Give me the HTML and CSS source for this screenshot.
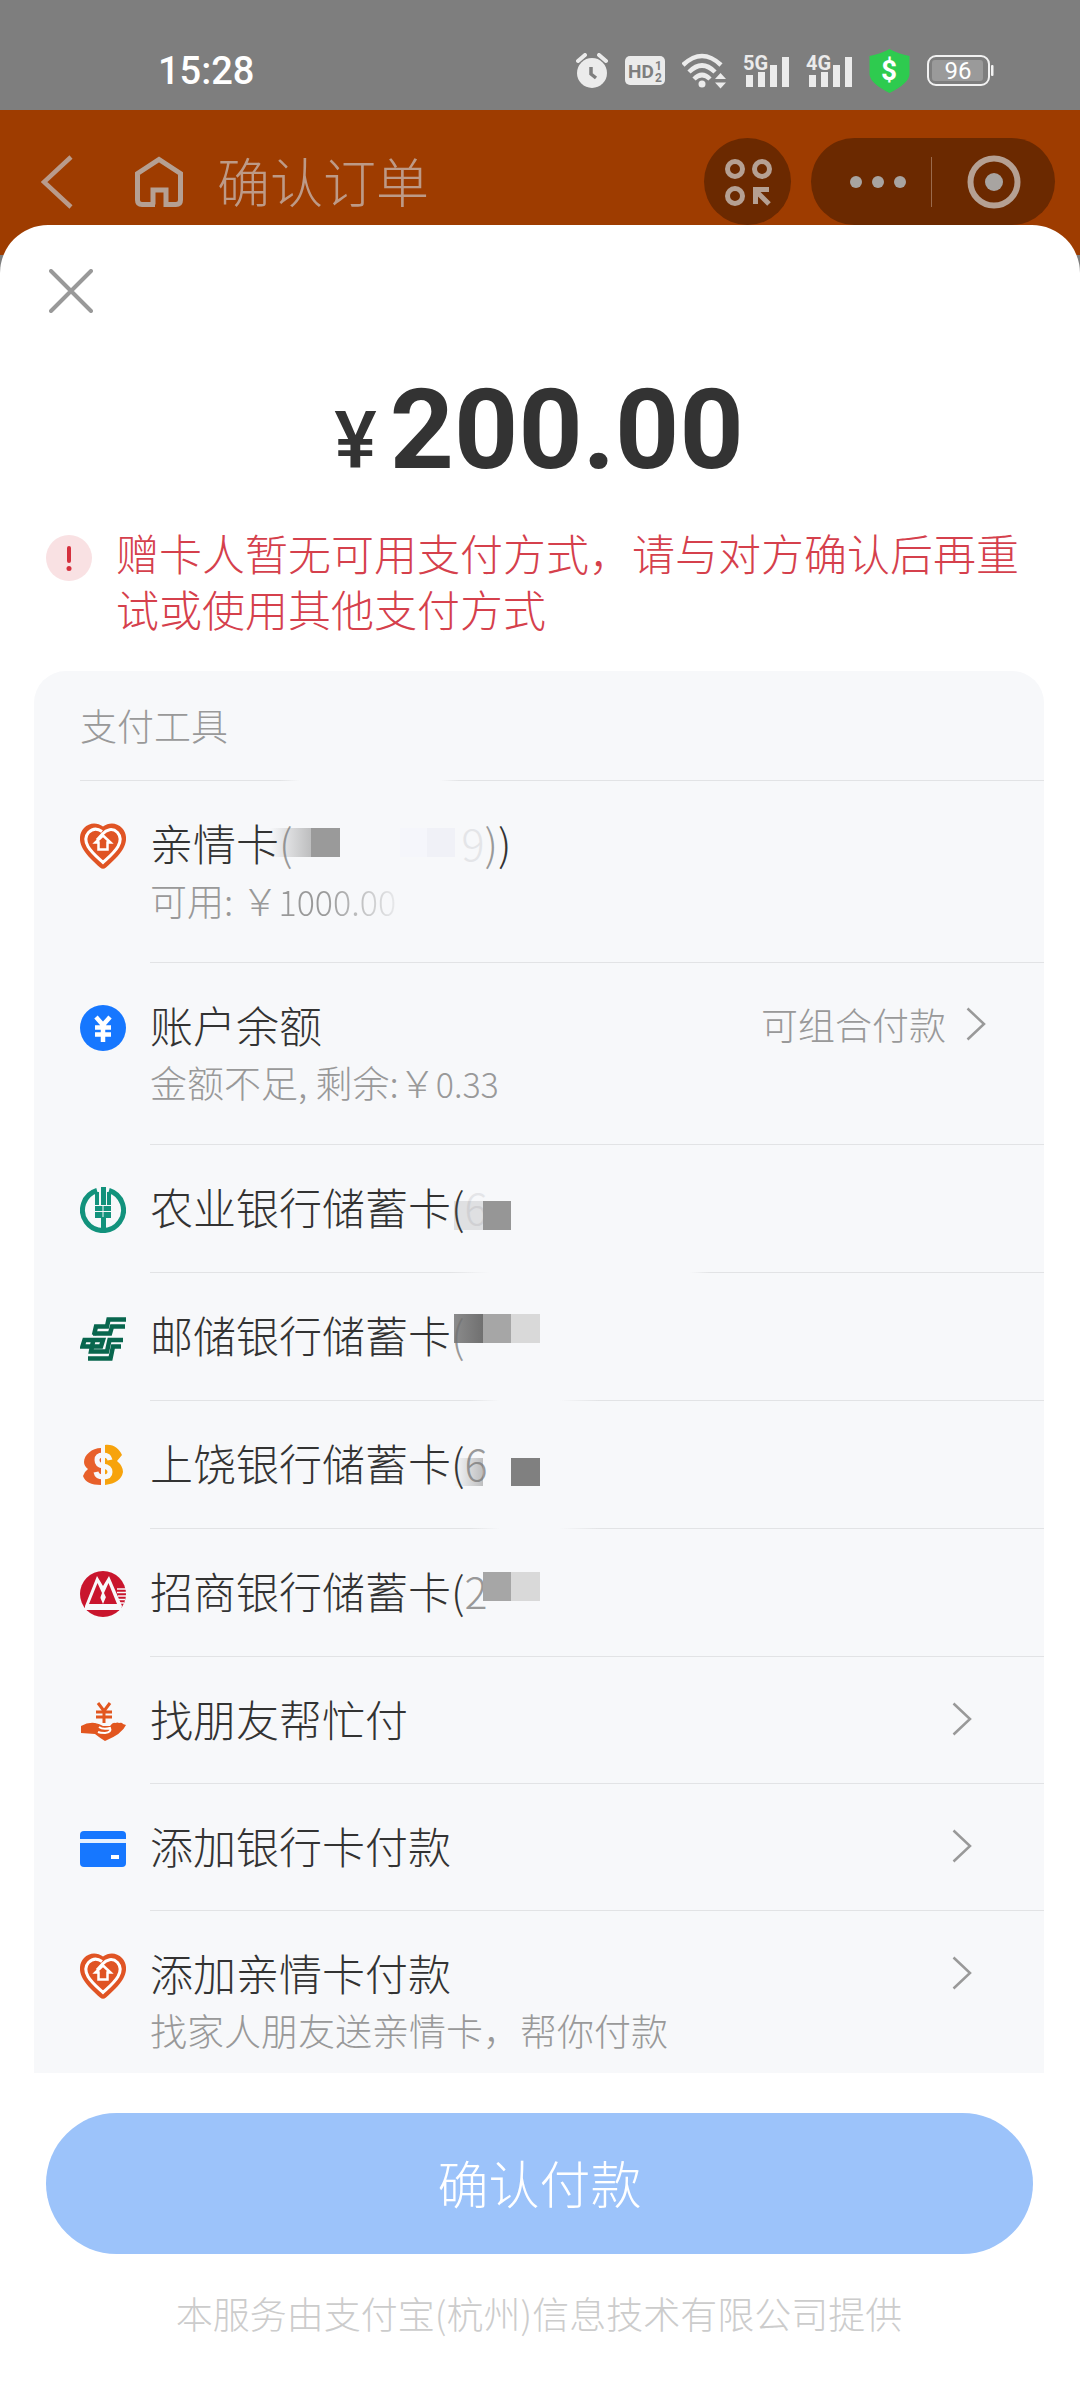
FILE: index.html
```html
<!DOCTYPE html>
<html lang="zh-CN">
<head>
<meta charset="utf-8">
<meta name="viewport" content="width=device-width, initial-scale=1">
<title>确认订单</title>
<link rel="stylesheet" href="styles.css">
</head>
<body>
<svg class="defs" aria-hidden="true">
  <defs>
    <symbol id="heart" viewBox="0 0 46 46">
      <path d="M23 3.500C17-1 9-.5 4 5-1.500 11-1 19 3 26c4 7 11 13 17 18.500q3 2.500 6 0C32 39 39 33 43 26c4-7 4.500-15-1-21C37-.5 29-1 23 3.500z" fill="#e05424"/>
      <path d="M22 8.500c-5-3.500-10-2.500-13.500 1C5 13.500 5.500 19 8 23.500 11.500 29.500 17 34 23 39.500c6-5.500 11.500-10 15-16 2.500-4.500 3-10-.5-14-5-5-11-3-15 1.500l-5.500 6" fill="none" stroke="#fff" stroke-width="3"/>
      <path d="M15.500 19.500L23 12.500l7.500 7h-3v7h-9v-7z" fill="none" stroke="#fff" stroke-width="2.500"/>
    </symbol>
    <symbol id="chevron" viewBox="0 0 20 34">
      <path d="M1.500 1.500L18 17 1.500 32.500" fill="none" stroke="#999" stroke-width="2.500"/>
    </symbol>
    <linearGradient id="fadeIn"><stop offset="0" stop-color="#777" stop-opacity="0"/><stop offset="1" stop-color="#777" stop-opacity=".45"/></linearGradient>
    <linearGradient id="fadeDark"><stop offset="0" stop-color="#707070" stop-opacity=".8"/><stop offset="1" stop-color="#707070"/></linearGradient>
  </defs>
</svg>

<div class="statusbar">
  <time class="clock">15:28</time>
  <div class="indicators">
    <svg width="32" height="36" viewBox="0 0 32 36"><path d="M2 8l7-6M30 8l-7-6" stroke="#ebebeb" stroke-width="4" stroke-linecap="round"/><circle cx="16" cy="20" r="15" fill="#ebebeb"/><path d="M15 14v7l5 4" fill="none" stroke="#7e7e7e" stroke-width="3.500"/></svg>
    <svg width="40" height="30" viewBox="0 0 40 30"><rect width="40" height="29" rx="5" fill="#ebebeb"/><text class="hd" x="3" y="22">HD</text><text class="hd-small" x="30" y="14">1</text><text class="hd-small" x="30" y="26">2</text></svg>
    <svg width="44" height="36" viewBox="0 0 44 36"><g fill="none" stroke="#ebebeb" stroke-width="4.500"><path d="M1 12q19-18 38 0"/><path d="M7 19q13-13 26 0"/><path d="M12 26q8-8 16 0"/></g><circle cx="20" cy="31" r="3.500" fill="#ebebeb"/><path d="M33 26l5.500-6 5.500 6zM33 29.500l5.500 6 5.500-6z" fill="#ebebeb"/></svg>
    <svg width="46" height="44" viewBox="0 -5 46 44"><text class="net" x="0" y="16">5G</text><path d="M3 21h7v12H3zM15 18h7v15h-7zM27 11h7v22h-7zM39 3h7v30h-7z" fill="#ebebeb"/></svg>
    <svg width="46" height="44" viewBox="0 -5 46 44"><text class="net" x="0" y="16">4G</text><path d="M3 21h7v12H3zM15 18h7v15h-7zM27 11h7v22h-7zM39 3h7v30h-7z" fill="#ebebeb"/></svg>
    <svg width="41" height="44" viewBox="0 0 41 44"><path d="M20.500 0q9 5 20 7v18q0 9-20 19Q.5 34 .5 25V7q11-2 20-7z" fill="#2ecb4f"/><text class="dollar" x="20" y="31" text-anchor="middle">$</text></svg>
    <svg width="67" height="32" viewBox="0 0 67 32"><rect x="1" y="1" width="61" height="29" rx="8" fill="none" stroke="#f2f2f2" stroke-width="2"/><rect x="5" y="5" width="51" height="21" rx="3" fill="#9a9a9a"/><rect x="64" y="10" width="2.500" height="11" rx="1" fill="#f2f2f2"/><text class="charge" x="31" y="24" text-anchor="middle">96</text></svg>
  </div>
</div>

<header class="navbar">
  <button class="plain" aria-label="返回"><svg width="32" height="54" viewBox="0 0 32 54"><path d="M30 2L3 27l27 25" fill="none" stroke="#b99b8b" stroke-width="4.500"/></svg></button>
  <button class="plain home" aria-label="首页"><svg width="48" height="52" viewBox="0 0 48 52"><path d="M20 48.500H7q-4.500 0-4.500-4.500V17.500L24 3.500l21.500 14V44q0 4.500-4.500 4.500H31V34H18v14.500z" fill="none" stroke="#b5a093" stroke-width="5"/></svg></button>
  <h1 class="nav-title">确认订单</h1>
  <button class="scan" aria-label="小程序"><svg width="48" height="48" viewBox="0 0 48 48"><g fill="none" stroke="#b5a093" stroke-width="5"><circle cx="11" cy="11" r="7.500"/><circle cx="38" cy="11" r="7.500"/><circle cx="11" cy="38" r="7.500"/><path d="M45 46L33 34M31.500 46V31.500H45"/></g></svg></button>
  <div class="capsule">
    <button class="plain more" aria-label="更多"><svg width="58" height="14" viewBox="0 0 58 14"><g fill="#a8a4a1"><circle cx="7" cy="7" r="6"/><circle cx="29" cy="7" r="6"/><circle cx="51" cy="7" r="6"/></g></svg></button>
    <button class="plain exit" aria-label="关闭小程序"><svg width="56" height="56" viewBox="0 0 56 56"><circle cx="28" cy="28" r="23.500" fill="none" stroke="#b5a093" stroke-width="6"/><circle cx="28" cy="28" r="9" fill="#a8a4a1"/></svg></button>
  </div>
</header>

<main class="sheet">
  <button class="plain close" aria-label="关闭"><svg width="44" height="44" viewBox="0 0 44 44"><path d="M2 2l40 40M42 2L2 42" stroke="#999" stroke-width="4" stroke-linecap="round"/></svg></button>

  <p class="amount"><span class="currency">¥</span><span>200.00</span></p>

  <div class="alert" role="alert">
    <svg class="alert-icon" width="46" height="46" viewBox="0 0 46 46"><circle cx="23" cy="23" r="23" fill="#f9e1e3"/><path d="M23 13v13" stroke="#d5303e" stroke-width="4" stroke-linecap="round"/><circle cx="23" cy="33.500" r="2.500" fill="#d5303e"/></svg>
    <p>赠卡人暂无可用支付方式，请与对方确认后再重试或使用其他支付方式</p>
  </div>

  <section class="card">
    <h2 class="card-title">支付工具</h2>
    <ul class="methods">
      <li><button class="row tall">
        <svg class="icon"><use href="#heart"/></svg>
        <span class="body"><span class="text"><span class="name">亲情卡<span class="dim">(</span><span class="tail"><span class="ghost">9</span><span class="dim">)</span>)</span>
          <svg class="mosaic" viewBox="0 0 400 60"><rect x="120" y="16" width="41" height="29" fill="url(#fadeIn)"/><rect x="161" y="16" width="29" height="29" fill="#9a9a9a"/><rect x="250" y="16" width="27" height="29" fill="#f5f6fb"/><rect x="277" y="16" width="28" height="29" fill="#f0f1f7"/></svg></span>
          <span class="note">可用: ￥<span class="digits fading">1000.00</span></span></span></span>
      </button></li>
      <li><button class="row tall">
        <svg class="icon" viewBox="0 0 46 46"><circle cx="23" cy="23" r="23" fill="#1677ff"/><path d="M16 12l7 8 7-8M15 22.500h16M15 29.500h16M23 20v17" fill="none" stroke="#fff" stroke-width="4.500"/></svg>
        <span class="body"><span class="text"><span class="name">账户余额</span>
          <span class="note">金额不足, 剩余:￥<span class="digits">0.33</span></span></span>
          <span class="aside">可组合付款<svg class="chevron"><use href="#chevron"/></svg></span></span>
      </button></li>
      <li><button class="row bank">
        <svg class="icon" viewBox="0 0 46 46"><path d="M17 3.500A20.500 20.500 0 1 0 29 3.500" fill="none" stroke="#12927c" stroke-width="5"/><path d="M21 0h5v18h-5zM15 5h4v13h-4zM27 5h4v13h-4zM15 19h7.500v5H15zM23.500 19H31v5h-7.500zM15 25h7.500v6H15zM23.500 25H31v6h-7.500zM21 30h5v14h-5z" fill="#12927c"/></svg>
        <span class="body cut-a"><span class="name">农业银行储蓄卡(<span class="ghost">6</span>
          <svg class="mosaic" viewBox="0 0 400 60"><rect x="304" y="25" width="29" height="29" fill="#777" opacity=".18"/><rect x="333" y="25" width="28" height="29" fill="#969696"/></svg></span></span>
      </button></li>
      <li><button class="row bank">
        <svg class="icon" viewBox="0 0 46 46"><g fill="none" stroke="#08664e" stroke-width="4.500"><path d="M46 4.500H28.500L27 11.500H16L14 20"/><path d="M45 11.500H32L30 18.500H13"/><path d="M43 25H29.500L27 36.500H11L13.500 24"/><path d="M41 31.500H33L30.500 43.500H8"/><path d="M2.500 31.500L4.500 25H23l-2 6.500z"/></g></svg>
        <span class="body cut-b"><span class="name">邮储银行储蓄卡<span class="dim">(</span>
          <svg class="mosaic" viewBox="0 0 400 60"><rect x="304" y="10" width="29" height="29" fill="url(#fadeDark)"/><rect x="333" y="10" width="28" height="29" fill="#a6a6a6"/><rect x="361" y="10" width="29" height="29" fill="#d9d9d9"/></svg></span></span>
      </button></li>
      <li><button class="row bank">
        <svg class="icon" viewBox="0 0 46 46"><path d="M21 5C12 5 4 12 4 19q0 4 4 7-3 2-5 7 3 9 18 9z" fill="#e8602a"/><path d="M25 2c9-1 14 4 17 10l-5 6q6 5 6 11-2 11-18 13z" fill="#f7a30c"/><path d="M30 17q-1-5-7-5-6 0-6 5t6 6q7 1 7 6t-7 5q-6 0-7-5" fill="none" stroke="#f7f8fa" stroke-width="5"/><path d="M23 3v9M23 34v9" stroke="#f7f8fa" stroke-width="4"/></svg>
        <span class="body cut-b"><span class="name">上饶银行储蓄卡(<span class="dim">6</span>
          <svg class="mosaic" viewBox="0 0 400 60"><rect x="304" y="26" width="29" height="28" fill="url(#fadeIn)"/><rect x="361" y="26" width="29" height="28" fill="#808080"/></svg></span></span>
      </button></li>
      <li><button class="row bank">
        <svg class="icon" viewBox="0 0 46 46"><circle cx="23" cy="23" r="23" fill="#c9152d"/><path d="M5 35L17 5l6 10 6-10 13 30-1 4H5z" fill="#f7f8fa"/><path d="M9 33l8.500-21L22 22l-4 11zM37 33l-8.500-21L24 22l5 11z" fill="#c9152d"/><path d="M15 33l2.500-13L23 33zM31 33l-2.500-13L23 33z" fill="#c9152d"/><path d="M37 18h9M37 21.500h9M38 25h8M39 28.500h6M40 32h4" stroke="#f7f8fa" stroke-width="1.500"/></svg>
        <span class="body"><span class="name">招商银行储蓄卡(<span class="dim">2</span>
          <svg class="mosaic" viewBox="0 0 400 60"><rect x="333" y="12" width="28" height="29" fill="#a6a6a6"/><rect x="361" y="12" width="29" height="29" fill="#d9d9d9"/></svg></span></span>
      </button></li>
      <li><button class="row action">
        <svg class="icon" viewBox="0 0 46 46"><path d="M18 4l6 8 6-8M16 13h16M16 18h16M24 12v12" fill="none" stroke="#e2561f" stroke-width="3"/><path d="M1 27q7-4 14-3 5 1 8 3h7q3-4 5-3 3-1 4 0 3-1 4 1l3 1q-4 9-21 16-5-3-10-7l-14-1z" fill="#e2561f"/><path d="M19 28q4 3 11 1 2 4-5 5-5 0-7-1" fill="none" stroke="#fff" stroke-width="2"/></svg>
        <span class="body"><span class="name">找朋友帮忙付</span><svg class="chevron inset"><use href="#chevron"/></svg></span>
      </button></li>
      <li><button class="row action">
        <svg class="icon" viewBox="0 0 46 46"><rect y="5" width="46" height="36" rx="4" fill="#1677ff"/><path d="M0 15h46" stroke="#e6f1ff" stroke-width="4"/><rect x="31" y="29" width="8" height="4" fill="#fff"/></svg>
        <span class="body"><span class="name">添加银行卡付款</span><svg class="chevron inset"><use href="#chevron"/></svg></span>
      </button></li>
      <li><button class="row last">
        <svg class="icon"><use href="#heart"/></svg>
        <span class="body"><span class="text"><span class="name">添加亲情卡付款</span>
          <span class="note">找家人朋友送亲情卡，帮你付款</span></span><svg class="chevron inset"><use href="#chevron"/></svg></span>
      </button></li>
    </ul>
  </section>

  <button class="confirm">确认付款</button>
  <p class="provider">本服务由支付宝(杭州)信息技术有限公司提供</p>
</main>
</body>
</html>
```
FILE: styles.css
```css
* { box-sizing: border-box; }
body, h1, h2, p, ul { margin: 0; padding: 0; }
body {
  min-height: 100vh;
  display: flex;
  flex-direction: column;
  background: #7e7e7e;
  color: #333;
  font-family: "Noto Sans CJK SC", sans-serif;
  font-weight: 300;
}
ul { list-style: none; }
svg { display: block; flex: none; }
button { font: inherit; color: inherit; border: 0; padding: 0; margin: 0; background: none; text-align: left; }
.defs { position: absolute; width: 0; height: 0; }
.plain { display: flex; align-items: center; justify-content: center; }

.statusbar {
  height: 110px;
  padding: 32px 86px 0 158px;
  display: flex;
  justify-content: space-between;
  align-items: center;
  color: #fff;
}
.clock { font: 500 38px/44px Roboto, sans-serif; }
.indicators { display: flex; align-items: center; gap: 17px; }
.indicators text { font-family: Roboto, sans-serif; font-weight: 700; fill: #ebebeb; }
.indicators .hd { font-size: 19px; fill: #7e7e7e; }
.indicators .hd-small { font-size: 12px; fill: #7e7e7e; }
.indicators .net { font-size: 20px; }
.indicators .dollar { font-size: 28px; fill: #fff; }
.indicators .charge { font-size: 24px; font-weight: 400; fill: #fff; }

.navbar {
  height: 145px;
  padding: 28px 25px 30px 41px;
  display: flex;
  align-items: center;
  background: #9e3c00;
}
.home { margin-left: 62px; }
.nav-title { flex: 1; margin-left: 34px; padding-bottom: 4px; font-size: 53px; line-height: 80px; font-weight: 300; color: #bd9a87; }
.scan { width: 87px; height: 87px; border-radius: 50%; background: #6b2900; display: flex; align-items: center; justify-content: center; }
.capsule { width: 244px; height: 87px; margin-left: 20px; border-radius: 44px; background: #6b2900; display: flex; align-items: center; }
.more { width: 121px; height: 50px; padding-left: 14px; border-right: 1px solid #9a6a4c; }
.exit { flex: 1; height: 87px; }

.sheet {
  flex: 1;
  display: flex;
  flex-direction: column;
  margin-top: -30px;
  padding: 44px 36px 56px 34px;
  border-radius: 48px 48px 0 0;
  background: #fff;
}
.close { align-self: flex-start; margin-left: 15px; }

.amount {
  margin-top: 57px;
  display: flex;
  justify-content: center;
  align-items: baseline;
  gap: 13px;
  font: 700 112px/120px Roboto, sans-serif;
}
.currency { font-size: 80px; line-height: 80px; font-weight: 500; }

.alert { display: flex; gap: 24px; margin: 34px 0 35px; padding: 0 12px; color: #d5404c; font-size: 43px; line-height: 56px; }
.alert-icon { margin-top: 11px; }

.card { border-radius: 32px 32px 0 0; background: #f7f8fa; overflow: hidden; }
.card-title {
  height: 110px;
  margin-left: 46px;
  font-size: 37px;
  line-height: 108px;
  font-weight: 300;
  color: #999;
  background: linear-gradient(90deg, #e2e3e5 200px, transparent 220px, transparent 360px, #e2e3e5 380px) bottom / 100% 1px no-repeat;
}
.row { width: 100%; display: flex; padding-left: 46px; gap: 24px; }
.icon { width: 46px; height: 46px; margin-top: 42px; }
.body {
  flex: 1;
  display: flex;
  justify-content: space-between;
  align-items: flex-start;
  padding: 31px 0 0;
  background: linear-gradient(#e2e3e5, #e2e3e5) bottom / 100% 1px no-repeat;
}
.cut-a { background-image: linear-gradient(90deg, #e2e3e5 300px, transparent 340px, transparent 540px, #e2e3e5 560px); }
.cut-b { background-image: linear-gradient(90deg, #e2e3e5 320px, transparent 350px, transparent 410px, #e2e3e5 450px); }
.tall { height: 182px; }
.bank { height: 128px; }
.action { height: 127px; }
.last { height: 162px; }
.last .body { background: none; }
.text { display: flex; flex-direction: column; }
.name { position: relative; font-size: 43px; line-height: 60px; white-space: nowrap; }
.note, .aside { font-size: 37px; color: #999; white-space: nowrap; }
.note { line-height: 56px; }
.digits { font-size: 34px; }
.fading { color: transparent; background: linear-gradient(90deg, #999 40%, #e8e9eb); background-clip: text; -webkit-background-clip: text; }
.aside { display: flex; align-items: center; gap: 20px; margin-right: 58px; line-height: 60px; }
.chevron { width: 20px; height: 34px; }
.inset { margin: 14px 72px 0 0; }
.tail { margin-left: 169px; }
.ghost { color: #e4e5e8; }
.dim { color: #999; }
.mosaic { position: absolute; left: 0; top: 0; width: 400px; height: 60px; }

.confirm {
  height: 141px;
  margin: 40px 11px 0 12px;
  padding-bottom: 4px;
  border-radius: 72px;
  background: #9cc3fa;
  color: #fff;
  font-size: 51px;
  text-align: center;
}
.provider { margin-top: 34px; font-size: 37px; line-height: 50px; text-align: center; color: #ccc; }
```
